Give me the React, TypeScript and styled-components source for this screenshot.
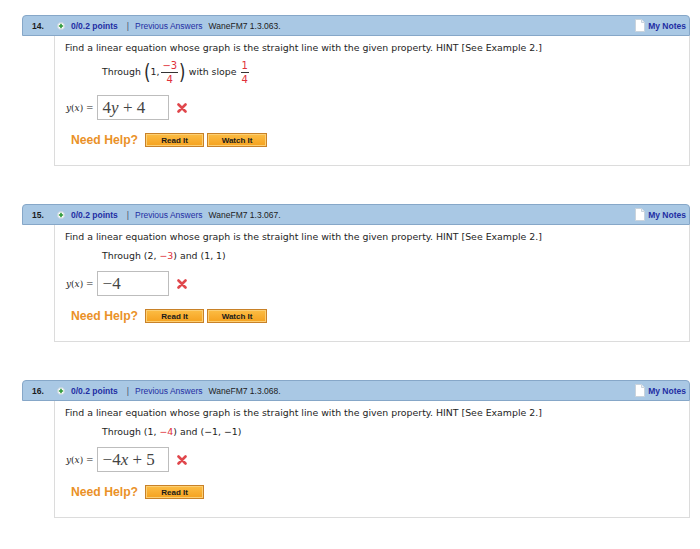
import React from 'react'
import styled, { createGlobalStyle } from 'styled-components'

const GlobalStyle = createGlobalStyle`
  body {
    margin: 0;
    background: #ffffff;
    font-family: "DejaVu Sans", Verdana, sans-serif;
  }
`

const Page = styled.div`
  width: 668px;
  padding: 15px 0 0 22px;
`

const Question = styled.div`
  margin-bottom: 38px;
`

const Header = styled.div`
  height: 21px;
  box-sizing: border-box;
  display: flex;
  align-items: center;
  padding: 0 3px 0 9px;
  background: #a9c8e4;
  border: 1px solid #86a7c8;
  border-radius: 4px 4px 0 0;
  font-family: "Liberation Sans", Arial, sans-serif;
  font-size: 8.5px;
  color: #1c1c1c;
`

const Number = styled.span`
  width: 25px;
  font-weight: bold;
`

const Status = styled.span`
  width: 8px;
  height: 8px;
  border-radius: 50%;
  background: #ffffff;
  border: 1px solid #c5d3df;
  box-sizing: border-box;
  margin-right: 6px;
  display: flex;
  align-items: center;
  justify-content: center;
`

const HeaderLink = styled.span<{ $bold?: boolean }>`
  color: #1f2ea3;
  font-weight: ${p => (p.$bold ? 'bold' : 'normal')};
`

const Divider = styled.span`
  color: #44506a;
  margin: 0 6px 0 9px;
`

const Source = styled.span`
  margin-left: 6px;
`

const Notes = styled.span`
  margin-left: auto;
  display: flex;
  align-items: center;
  gap: 3px;
  color: #1f2ea3;
  font-weight: bold;
`

const Body = styled.div`
  margin-left: 32px;
  border: 1px solid #dcdcdc;
  border-top: none;
  padding: 6px 10px 18px 10px;
  font-size: 9.4px;
  color: #1e1e1e;
`

const Line = styled.div`
  line-height: 12px;
  white-space: nowrap;
`

const Given = styled.div<{ $tall?: boolean }>`
  margin: ${p => (p.$tall ? '4px' : '7px')} 0 0 37px;
  min-height: ${p => (p.$tall ? '28px' : '12px')};
  display: flex;
  align-items: center;
  white-space: pre;
  line-height: 12px;
`

const Red = styled.span`
  color: #e0313a;
`

const Paren = styled.span`
  font-family: "DejaVu Sans", sans-serif;
  font-weight: normal;
  font-size: 22px;
  line-height: 28px;
  color: #2a2a2a;
  transform: scaleX(0.75);
  margin: 0 -1px;
`

const Fraction = styled.span<{ $gap?: number }>`
  display: inline-flex;
  flex-direction: column;
  align-items: center;
  margin: 0 2px 0 ${p => p.$gap ?? 3}px;
  color: #e0313a;
  font-size: 10px;
  line-height: 11px;
`

const Bar = styled.span`
  align-self: stretch;
  height: 1px;
  background: #333333;
  margin: 1px -1px;
`

const AnswerRow = styled.div`
  margin-top: 9px;
  display: flex;
  align-items: center;
  padding-left: 1px;
`

const Label = styled.span`
  font-family: "DejaVu Serif", serif;
  font-size: 9px;
  margin-right: 3px;
  i { font-style: italic; }
`

const Box = styled.div`
  width: 72px;
  height: 25px;
  box-sizing: border-box;
  border: 1px solid #bdbdbd;
  display: flex;
  align-items: center;
  padding-left: 5px;
  font-family: "Liberation Serif", "Times New Roman", serif;
  font-size: 17px;
  color: #444444;
  white-space: pre;
  i { font-style: italic; }
`

const Wrong = styled.span`
  margin-left: 8px;
  display: flex;
`

const HelpRow = styled.div`
  margin-top: 13px;
  display: flex;
  align-items: center;
  height: 14px;
  padding-left: 6px;
`

const HelpLabel = styled.span`
  font-family: "Liberation Sans", Arial, sans-serif;
  font-weight: bold;
  font-size: 12.2px;
  color: #ea9128;
  margin-right: 7px;
`

const HelpButton = styled.span<{ $width: number }>`
  width: ${p => p.$width}px;
  height: 14px;
  box-sizing: border-box;
  margin-right: 3px;
  display: flex;
  align-items: center;
  justify-content: center;
  border: 1px solid #c88128;
  box-shadow: inset 0 0 0 1px #fccf73;
  background: linear-gradient(#fcbd45, #f5a11e);
  font-family: "Liberation Sans", Arial, sans-serif;
  font-weight: bold;
  font-size: 8px;
  color: #1a1a1a;
`

const PlusIcon = () => (
  <svg width="6" height="6" viewBox="0 0 6 6">
    <path d="M3 0.8v4.4M0.8 3h4.4" stroke="#2f9a3a" strokeWidth="1.6" />
  </svg>
)

const NoteIcon = () => (
  <svg width="10" height="13" viewBox="0 0 10 13">
    <path d="M0.5 0.5h6l3 3v9h-9z" fill="#ffffff" stroke="#c9d3dc" />
    <path d="M6.5 0.5v3h3" fill="#eef2f5" stroke="#c9d3dc" />
  </svg>
)

const CrossIcon = () => (
  <svg width="10" height="10" viewBox="0 0 10 10">
    <path d="M1.5 1.5l7 7M8.5 1.5l-7 7" stroke="#e0474c" strokeWidth="2.6" strokeLinecap="round" />
  </svg>
)

type Q = {
  num: number
  code: string
  given: React.ReactNode
  tall?: boolean
  answer: React.ReactNode
  watch: boolean
}

const questions: Q[] = [
  {
    num: 14,
    code: '1.3.063.',
    tall: true,
    given: (
      <>
        Through <Paren>(</Paren>1,<Fraction><span>−3</span><Bar /><span>4</span></Fraction><Paren>)</Paren> with slope <Fraction $gap={2}><span>1</span><Bar /><span>4</span></Fraction>
      </>
    ),
    answer: <>4<i>y</i> + 4</>,
    watch: true,
  },
  {
    num: 15,
    code: '1.3.067.',
    given: <>Through (2, <Red>−3</Red>) and (1, 1)</>,
    answer: <>−4</>,
    watch: true,
  },
  {
    num: 16,
    code: '1.3.068.',
    given: <>Through (1, <Red>−4</Red>) and (−1, −1)</>,
    answer: <>−4<i>x</i> + 5</>,
    watch: false,
  },
]

export default function App() {
  return (
    <Page>
      <GlobalStyle />
      {questions.map(q => (
        <Question key={q.num}>
          <Header>
            <Number>{q.num}.</Number>
            <Status><PlusIcon /></Status>
            <HeaderLink $bold>0/0.2 points</HeaderLink>
            <Divider>|</Divider>
            <HeaderLink>Previous Answers</HeaderLink>
            <Source>WaneFM7 {q.code}</Source>
            <Notes><NoteIcon />My Notes</Notes>
          </Header>
          <Body>
            <Line>Find a linear equation whose graph is the straight line with the given property. HINT [See Example 2.]</Line>
            <Given $tall={q.tall}>{q.given}</Given>
            <AnswerRow>
              <Label><i>y</i>(<i>x</i>) =</Label>
              <Box>{q.answer}</Box>
              <Wrong><CrossIcon /></Wrong>
            </AnswerRow>
            <HelpRow>
              <HelpLabel>Need Help?</HelpLabel>
              <HelpButton $width={59}>Read It</HelpButton>
              {q.watch && <HelpButton $width={60}>Watch It</HelpButton>}
            </HelpRow>
          </Body>
        </Question>
      ))}
    </Page>
  )
}
